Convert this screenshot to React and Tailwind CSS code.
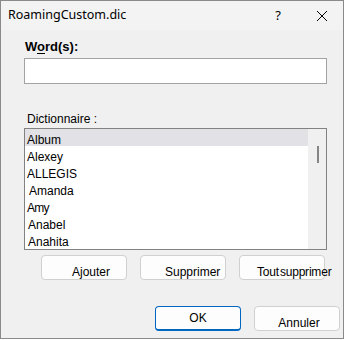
import React from "react";

const rows = [
  { t: "Album", pl: "pl-[2px]", sel: true },
  { t: "Alexey", pl: "pl-[2px]" },
  { t: "ALLEGIS", pl: "pl-[2px]" },
  { t: "Amanda", pl: "pl-[4px]" },
  { t: "Amy", pl: "pl-[2px]", narrow: true },
  { t: "Anabel", pl: "pl-[3px]" },
  { t: "Anahita", pl: "pl-[3px]" },
];

export default function App() {
  const arial = { fontFamily: '"Liberation Sans", Arial, sans-serif' };
  return (
    <div className="w-[344px] h-[339px] border border-[#8a8a8a] bg-[#f0f0f0] flex flex-col text-black" style={arial}>
      <div className="h-[29px] bg-[#f3f3f3] flex items-center pl-[7px] text-[12.5px]" style={{ fontFamily: '"Noto Sans", sans-serif' }}>
        <span className="flex-1 leading-none">RoamingCustom.dic</span>
        <span className="text-[13px] leading-none mr-[35px]">?</span>
        <svg width="12" height="12" viewBox="0 0 12 12" className="mr-[15px]">
          <path d="M1 1 L11 11 M11 1 L1 11" stroke="#000" strokeWidth="1" />
        </svg>
      </div>
      <div className="flex flex-col pl-[23px]">
        <div className="mt-[9px] text-[13px] font-bold leading-[16px] pl-[1px]">
          W<span className="underline underline-offset-2">o</span>rd(s):
        </div>
        <div className="mt-[3px] w-[303px] h-[26px] bg-white border border-[#a3a3a3]" />
        <div className="mt-[28px] text-[12px] leading-[14px] pl-[3px]">Dictionnaire :</div>
        <div className="mt-[2px] w-[303px] h-[122px] border border-[#828282] bg-white flex">
          <div className="flex-1 flex flex-col">
            {rows.map((r) => (
              <div
                key={r.t}
                className={`h-[17px] flex items-end text-[12px] ${r.pl} ${r.sel ? "bg-[#e1e1e6]" : ""}`}
              >
                <span className={`leading-[12px] ${r.narrow ? "tracking-[-0.8px]" : ""}`}>{r.t}</span>
              </div>
            ))}
          </div>
          <div className="w-[18px] bg-[#f0f0f0] flex justify-center pt-[17px]">
            <div className="w-[2px] h-[17px] bg-[#858585] ml-[1px]" />
          </div>
        </div>
        <div className="mt-[5px] flex gap-[13px] pl-[17px] text-[12px]">
          <div className="w-[86px] h-[25px] rounded-[4px] border border-[#d0d0d0] bg-[#fdfdfd] flex items-center pl-[30px] pt-[8px] leading-none">Ajouter</div>
          <div className="w-[86px] h-[25px] rounded-[4px] border border-[#d0d0d0] bg-[#fdfdfd] flex items-center pl-[24px] pt-[8px] leading-none">Supprimer</div>
          <div className="w-[86px] h-[25px] rounded-[4px] border border-[#d0d0d0] bg-[#fdfdfd] flex items-center pl-[17px] pt-[8px] leading-none whitespace-nowrap tracking-[-0.2px]">Tout<span className="ml-[1px]">supprimer</span></div>
        </div>
        <div className="mt-[26px] flex gap-[13px] pl-[131px] text-[12px]">
          <div className="w-[86px] h-[25px] rounded-[4px] border border-[#0067c0] border-b-[2px] bg-[#fdfdfd] flex items-center justify-center leading-none">OK</div>
          <div className="w-[86px] h-[25px] rounded-[4px] border border-[#d0d0d0] bg-[#fdfdfd] flex items-center justify-center pl-[4px] pt-[8px] leading-none">Annuler</div>
        </div>
      </div>
    </div>
  );
}
